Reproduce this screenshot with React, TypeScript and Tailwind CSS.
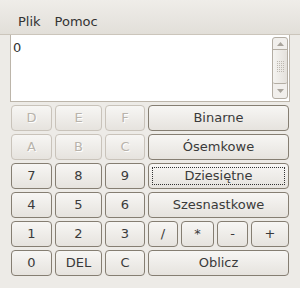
import React from "react";

type Btn = { label: string; disabled?: boolean; focused?: boolean };

const Key = ({ label, disabled, focused }: Btn) => (
  <div
    className={`relative flex h-[26px] w-full items-center justify-center rounded-[4px] border bg-gradient-to-b from-[#f7f6f4] to-[#e6e3de] text-[13px] font-normal ${
      disabled
        ? "border-[#c9c3ba] text-[#b8b3ab] [text-shadow:1px_1px_0_#fff]"
        : "border-[#857e72] text-[#3a3a3a]"
    }`}
  >
    {focused && (
      <span className="absolute inset-[3px] border border-dotted border-[#333]" />
    )}
    {label}
  </div>
);

const ScrollBar = () => (
  <div className="flex h-full w-[16px] flex-col rounded-[3px] border border-[#b3ada3] bg-[#f1efec]">
    <div className="flex h-[12px] items-center justify-center border-b border-[#b3ada3]">
      <svg width="7" height="4" viewBox="0 0 7 4">
        <path d="M0 4 L3.5 0 L7 4 Z" fill="#a8a39b" />
      </svg>
    </div>
    <div className="flex flex-1 items-center justify-center rounded-[2px] border-b border-[#b3ada3] bg-gradient-to-r from-[#f5f4f1] to-[#e4e1dc]">
      <div className="grid grid-cols-4 gap-[1px]">
        {Array.from({ length: 24 }).map((_, i) => (
          <span key={i} className="h-[1px] w-[1px] bg-[#bdb8b0]" />
        ))}
      </div>
    </div>
    <div className="flex h-[14px] items-center justify-center">
      <svg width="7" height="4" viewBox="0 0 7 4">
        <path d="M0 0 L3.5 4 L7 0 Z" fill="#a8a39b" />
      </svg>
    </div>
  </div>
);

export default function App() {
  const rows: Btn[][] = [
    [{ label: "D", disabled: true }, { label: "E", disabled: true }, { label: "F", disabled: true }],
    [{ label: "A", disabled: true }, { label: "B", disabled: true }, { label: "C", disabled: true }],
    [{ label: "7" }, { label: "8" }, { label: "9" }],
    [{ label: "4" }, { label: "5" }, { label: "6" }],
    [{ label: "1" }, { label: "2" }, { label: "3" }],
    [{ label: "0" }, { label: "DEL" }, { label: "C" }],
  ];
  const right: (Btn | null)[] = [
    { label: "Binarne" },
    { label: "Ósemkowe" },
    { label: "Dziesiętne", focused: true },
    { label: "Szesnastkowe" },
    null,
    { label: "Oblicz" },
  ];

  return (
    <div
      className="h-[288px] w-[300px] overflow-hidden bg-[#edebe7] text-[13px] text-[#333]"
      style={{ fontFamily: '"DejaVu Sans", sans-serif' }}
    >
      {/* menu */}
      <div className="flex h-[35px] items-center gap-[14px] border-b border-[#cbc5bb] bg-gradient-to-b from-[#efede9] to-[#e2dfd9] px-[18px] pt-[10px]">
        <span>Plik</span>
        <span>Pomoc</span>
      </div>

      {/* display */}
      <div className="ml-[10px] flex h-[67px] w-[280px] border-b border-l border-r border-[#bcb5aa] bg-white">
        <div className="flex-1 px-[2px] pt-[3px]">0</div>
        <div className="py-[2px] pr-[1px]">
          <ScrollBar />
        </div>
      </div>

      {/* keys */}
      <div className="mt-[3px] grid grid-cols-[41px_47px_40px_141px] gap-x-[3px] gap-y-[3px] pl-[11px]">
        {rows.map((row, r) => (
          <React.Fragment key={r}>
            {row.map((b) => (
              <Key key={b.label + r} {...b} />
            ))}
            {right[r] ? (
              <Key {...(right[r] as Btn)} />
            ) : (
              <div className="flex gap-[3px]">
                <div className="w-[30px]">
                  <Key label="/" />
                </div>
                <div className="w-[33px]">
                  <Key label="*" />
                </div>
                <div className="w-[31px]">
                  <Key label="-" />
                </div>
                <div className="flex-1">
                  <Key label="+" />
                </div>
              </div>
            )}
          </React.Fragment>
        ))}
      </div>
    </div>
  );
}
